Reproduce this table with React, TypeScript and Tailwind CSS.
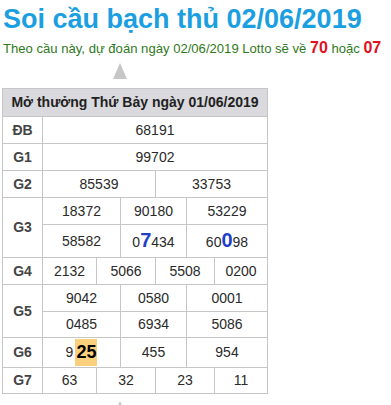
import React from "react";

const font = "font-['Liberation_Sans',Arial,sans-serif]";

type C = { t: React.ReactNode; span: string; label?: boolean };

function Cell({ t, span, label }: C) {
  return (
    <div
      className={`${span} bg-white flex items-center justify-center text-[14px] ${
        label ? "font-bold text-[#444]" : "text-[#2a2a2a]"
      }`}
    >
      {t}
    </div>
  );
}

const Big = ({ d }: { d: string }) => (
  <span className="text-[20px] font-bold text-[#1f3fc6] leading-none">{d}</span>
);

export default function App() {
  return (
    <div className={`${font} bg-white w-[391px] h-[405px] overflow-hidden`}>
      <div className="pl-[3px] mt-[3px] text-[27px] leading-[32px] font-bold text-[#1b9fe0]">
        Soi cầu bạch thủ 02/06/2019
      </div>
      <div className="pl-[3px] mt-[4px] text-[13.1px] leading-[20px] text-[#2f7a1c] whitespace-nowrap">
        Theo cầu này, dự đoán ngày 02/06/2019 Lotto sẽ về{" "}
        <span className="text-[16px] font-bold text-[#e0101c] leading-none">70</span> hoặc{" "}
        <span className="text-[16px] font-bold text-[#e0101c] leading-none">07</span>
      </div>
      <div className="ml-[113px] mt-[4px] w-0 h-0 border-l-[7px] border-r-[7px] border-b-[16px] border-l-transparent border-r-transparent border-b-[#c6c6c6]" />
      <div className="ml-[2px] mt-[9px] w-fit grid grid-cols-[39px_53px_23px_34px_30px_27px_52px] grid-rows-[27px_26px_26px_26px_26px_32px_26px_26px_25px_29px_25px] gap-px bg-[#c6c6c6] border border-[#c6c6c6]">
        <div className="col-span-7 bg-[#dadade] flex items-center justify-center text-[14px] font-bold text-[#222]">
          Mở thưởng Thứ Bảy ngày 01/06/2019
        </div>

        <Cell t="ĐB" span="col-span-1" label />
        <Cell t="68191" span="col-span-6" />

        <Cell t="G1" span="col-span-1" label />
        <Cell t="99702" span="col-span-6" />

        <Cell t="G2" span="col-span-1" label />
        <Cell t="85539" span="col-span-3" />
        <Cell t="33753" span="col-span-3" />

        <Cell t="G3" span="row-span-2" label />
        <Cell t="18372" span="col-span-2" />
        <Cell t="90180" span="col-span-2" />
        <Cell t="53229" span="col-span-2" />
        <Cell t="58582" span="col-span-2" />
        <Cell
          t={
            <span>
              0<Big d="7" />434
            </span>
          }
          span="col-span-2"
        />
        <Cell
          t={
            <span>
              60<Big d="0" />98
            </span>
          }
          span="col-span-2"
        />

        <Cell t="G4" span="col-span-1" label />
        <Cell t="2132" span="col-span-1" />
        <Cell t="5066" span="col-span-2" />
        <Cell t="5508" span="col-span-2" />
        <Cell t="0200" span="col-span-1" />

        <Cell t="G5" span="row-span-2" label />
        <Cell t="9042" span="col-span-2" />
        <Cell t="0580" span="col-span-2" />
        <Cell t="0001" span="col-span-2" />
        <Cell t="0485" span="col-span-2" />
        <Cell t="6934" span="col-span-2" />
        <Cell t="5086" span="col-span-2" />

        <Cell t="G6" span="col-span-1" label />
        <Cell
          t={
            <span className="flex items-center">
              9
              <span className="ml-[2px] px-[1px] text-[18px] font-bold text-black bg-[#fbd07d]">25</span>
            </span>
          }
          span="col-span-2"
        />
        <Cell t="455" span="col-span-2" />
        <Cell t="954" span="col-span-2" />

        <Cell t="G7" span="col-span-1" label />
        <Cell t="63" span="col-span-1" />
        <Cell t="32" span="col-span-2" />
        <Cell t="23" span="col-span-2" />
        <Cell t="11" span="col-span-1" />
      </div>
      <div className="ml-[113px] mt-[7px] w-0 h-0 border-l-[7px] border-r-[7px] border-b-[16px] border-l-transparent border-r-transparent border-b-[#c6c6c6]" />
    </div>
  );
}
